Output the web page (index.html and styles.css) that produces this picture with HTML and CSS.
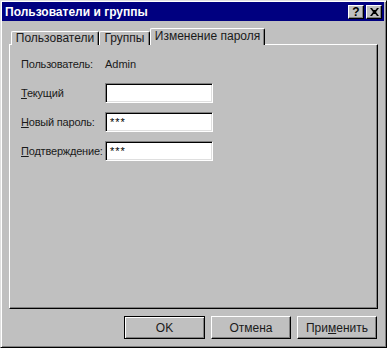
FILE: index.html
```html
<!DOCTYPE html>
<html lang="ru">
<head>
<meta charset="utf-8">
<link rel="stylesheet" href="styles.css">
</head>
<body>
<div class="window">
  <div class="titlebar">
    <span class="title">Пользователи и группы</span>
    <span class="tbtn help">?</span>
    <span class="tbtn close"><svg width="9" height="8" viewBox="0 0 9 8"><path d="M0 0h2l1.5 2h2L7 0h2L6 4l3 4H7L5.5 6h-2L2 8H0l3-4z" fill="#000"/></svg></span>
  </div>
  <div class="content">
    <div class="tabs">
      <div class="tab t1">Пользователи</div>
      <div class="tab t2">Группы</div>
      <div class="tab t3 active">Изменение пароля</div>
    </div>
    <div class="panel">
      <div class="form">
        <div class="label">Пользователь:</div>
        <div class="value">Admin</div>
        <div class="label"><u>Т</u>екущий</div>
        <div class="field"></div>
        <div class="label"><u>Н</u>овый пароль:</div>
        <div class="field">***</div>
        <div class="label"><u>П</u>одтверждение:</div>
        <div class="field">***</div>
      </div>
    </div>
    <div class="buttons">
      <div class="btn default"><span>OK</span></div>
      <div class="btn"><span>Отмена</span></div>
      <div class="btn"><span>При<u>м</u>енить</span></div>
    </div>
  </div>
</div>
</body>
</html>
```
FILE: styles.css
```css
html, body {
  margin: 0;
  padding: 0;
  background: #c0c0c0;
}
.window {
  width: 387px;
  height: 348px;
  box-sizing: border-box;
  background: #c0c0c0;
  border: 1px solid;
  border-color: #dfdfdf #000 #000 #dfdfdf;
  box-shadow: inset 1px 1px #fff, inset -1px -1px #808080;
  padding: 1px 2px 2px 1px;
  display: flex;
  flex-direction: column;
  font-family: "Liberation Sans", Arial, sans-serif;
  font-size: 12px;
  color: #000;
}
.titlebar {
  height: 19px;
  background: #000080;
  display: flex;
  align-items: center;
  padding: 1px 2px 0 3px;
  box-sizing: border-box;
  color: #fff;
  font-weight: bold;
  font-size: 12px;
}
.title {
  flex: 1;
  white-space: nowrap;
}
.tbtn {
  width: 16px;
  height: 14px;
  box-sizing: border-box;
  background: #c0c0c0;
  border: 1px solid;
  border-color: #fff #000 #000 #fff;
  box-shadow: inset -1px -1px #808080;
  display: flex;
  align-items: center;
  justify-content: center;
  color: #000;
  font-size: 12px;
  font-weight: bold;
  line-height: 1;
}
.close {
  margin-left: 2px;
}
.content {
  flex: 1;
  display: flex;
  flex-direction: column;
  padding: 7px 6px 0 7px;
}
.tabs {
  display: flex;
  align-items: flex-end;
  padding-left: 2px;
  height: 17px;
  margin-bottom: -1px;
  position: relative;
  z-index: 1;
}
.tab {
  box-sizing: border-box;
  height: 14px;
  border-top: 1px solid #fff;
  border-left: 1px solid #fff;
  border-right: 1px solid #000;
  box-shadow: inset -1px 0 #808080;
  border-radius: 2px 2px 0 0;
  background: #c0c0c0;
  text-align: center;
  line-height: 13px;
  white-space: nowrap;
  color: #1a1a1a;
}
.t1 { width: 88px; }
.t2 { width: 51px; }
.t3 { width: 115px; }
.tab.active {
  height: 17px;
  line-height: 14px;
}
.panel {
  height: 265px;
  box-sizing: border-box;
  border: 1px solid;
  border-color: #fff #000 #000 #fff;
  box-shadow: inset -1px -1px #808080;
  padding: 9px 0 0 11px;
}
.form {
  display: grid;
  grid-template-columns: 84px 108px;
  grid-auto-rows: 20px;
  row-gap: 9px;
  align-items: center;
  font-size: 11px;
  color: #1a1a1a;
}
.label, .value {
  white-space: nowrap;
}
.label {
  letter-spacing: -0.2px;
}
.field {
  height: 20px;
  box-sizing: border-box;
  background: #fff;
  border: 1px solid;
  border-color: #808080 #fff #fff #808080;
  box-shadow: inset 1px 1px #000, inset -1px -1px #dfdfdf;
  padding: 0 0 0 4px;
  line-height: 19px;
  letter-spacing: 1px;
  font-size: 11px;
  color: #000;
}
.buttons {
  display: flex;
  justify-content: flex-end;
  gap: 6px;
  margin-top: 7px;
  padding-right: 1px;
}
.btn {
  width: 80px;
  height: 23px;
  box-sizing: border-box;
  border: 1px solid;
  border-color: #fff #000 #000 #fff;
  box-shadow: inset -1px -1px #808080;
  display: flex;
  align-items: center;
  justify-content: center;
  background: #c0c0c0;
  color: #1a1a1a;
}
.btn.default {
  width: 81px;
  border: 1px solid #000;
  box-shadow: inset 1px 1px #fff, inset -1px -1px #808080;
}
```
